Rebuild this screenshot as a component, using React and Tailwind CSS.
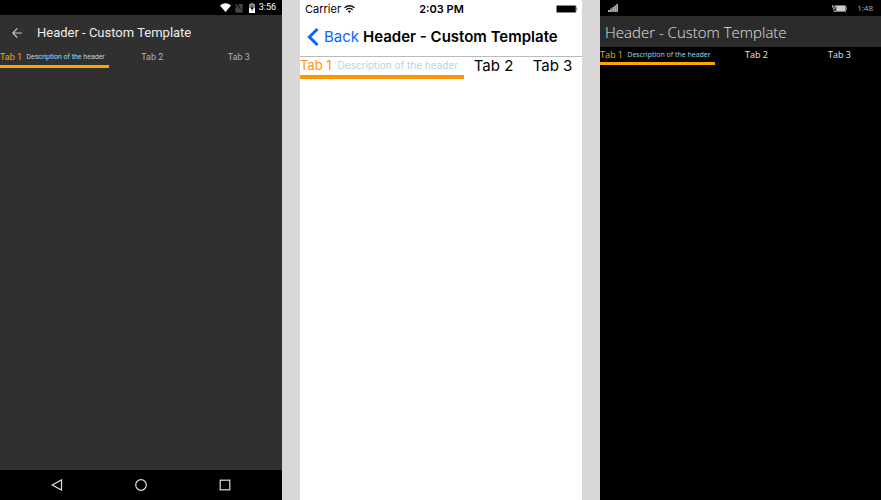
import React from "react";

function Tabs({ className, tabClass, activeClass, titleClass, descriptionClass }) {
  return (
    <div role="tablist" className={`flex items-start whitespace-nowrap ${className}`}>
      <button role="tab" aria-selected="true" className={`flex shrink-0 items-center ${activeClass}`}>
        <span className={titleClass}>Tab 1</span>
        <span className={`flex-1 text-center ${descriptionClass}`}>Description of the header</span>
      </button>
      <button role="tab" aria-selected="false" className={`flex-1 text-center ${tabClass}`}>Tab 2</button>
      <button role="tab" aria-selected="false" className={`flex-1 text-center ${tabClass}`}>Tab 3</button>
    </div>
  );
}

function AndroidScreen() {
  return (
    <section className="flex flex-col bg-[#303030] font-['Roboto',sans-serif]">
      <div className="flex h-[15px] items-center justify-end bg-black pr-[6px] text-white">
        <svg className="mr-[4px] h-[9px] w-[11px]" viewBox="0 0 11 9" fill="currentColor">
          <path d="M0 2.4Q5.5-1.8 11 2.4L5.5 9Z" />
        </svg>
        <svg className="mr-[6px] h-[10px] w-[8px]" viewBox="0 0 8 10">
          <path d="M3 1H7.5V9ZM0.5 3V9.5H7Z" fill="#4a4a4a" />
          <path d="M0.5 1L7.5 9.5" stroke="#888" strokeWidth="0.8" />
        </svg>
        <svg className="mr-[4px] h-[10px] w-[6px]" viewBox="0 0 6 10">
          <path d="M0 1H1.5V0H4.5V1H6V5H0Z" fill="#888" />
          <path d="M0 5H6V10H0Z" fill="#fff" />
          <path d="M3.5 2L1.5 6H2.8V8.5L4.8 4.8H3.5Z" fill="#111" />
        </svg>
        <span className="text-[9px] leading-[15px]">3:56</span>
      </div>
      <header className="flex h-[36px] items-center pl-[12px] text-[#eeeeee]">
        <button aria-label="Back" className="mr-[15px]">
          <svg className="h-[10px] w-[10px]" viewBox="0 0 10 10" fill="none" stroke="#c8c8c8" strokeWidth="1.1">
            <path d="M10 5H0.8M5.2 0.5L0.7 5L5.2 9.5" />
          </svg>
        </button>
        <h1 className="text-[13px] leading-[20px]">Header - Custom Template</h1>
      </header>
      <Tabs
        className="flex-1"
        activeClass="h-[17px] w-[109px] border-b-3 border-[#ffa500] pb-[2px]"
        titleClass="text-[9px] leading-[12px] text-[#ffa500]"
        descriptionClass="text-[7px] leading-[12px] text-[#add8e6]"
        tabClass="text-[9px] leading-[12px] text-[#b0b0b0]"
      />
      <nav className="flex h-[30px] items-center justify-center gap-[72px] bg-black">
        <button aria-label="Back">
          <svg className="h-[12px] w-[12px]" viewBox="0 0 12 12" fill="none" stroke="#ddd" strokeWidth="1.2">
            <path d="M10.5 0.9V11.1L1.2 6Z" />
          </svg>
        </button>
        <button aria-label="Home">
          <svg className="h-[12px] w-[12px]" viewBox="0 0 12 12" fill="none" stroke="#ddd" strokeWidth="1.2">
            <circle cx="6" cy="6" r="5.3" />
          </svg>
        </button>
        <button aria-label="Recent apps">
          <svg className="h-[12px] w-[12px]" viewBox="0 0 12 12" fill="none" stroke="#ddd" strokeWidth="1.2">
            <rect x="1.2" y="1.2" width="9.6" height="9.6" />
          </svg>
        </button>
      </nav>
    </section>
  );
}

function AppleScreen() {
  return (
    <section className="flex flex-col bg-white font-['Inter',sans-serif] text-black">
      <div className="grid h-[18px] grid-cols-3 items-center pl-[5px] pr-[4px] text-[11px] leading-[18px]">
        <span className="flex items-center gap-[3px]">
          Carrier
          <svg className="h-[8px] w-[11px]" viewBox="0 0 11 8" fill="none" stroke="#111" strokeWidth="1.4">
            <path d="M0.5 2.8Q5.5-1.3 10.5 2.8M2.3 4.7Q5.5 2.1 8.7 4.7" />
            <path d="M3.8 6.1Q5.5 4.8 7.2 6.1L5.5 8Z" fill="#111" stroke="none" />
          </svg>
        </span>
        <span className="text-center font-semibold">2:03 PM</span>
        <svg className="h-[8px] w-[22px] justify-self-end" viewBox="0 0 22 8">
          <rect x="0.5" y="0.5" width="19.5" height="7" rx="1" fill="#000" stroke="#888" />
          <path d="M20.7 2.5Q22 4 20.7 5.5Z" fill="#222" />
        </svg>
      </div>
      <header className="flex h-[39px] items-center whitespace-nowrap border-b border-[#bababa] pl-[7px]">
        <button className="flex items-center gap-[5px] text-[15px] leading-[20px] text-[#0a66ff]">
          <svg className="h-[18px] w-[12px]" viewBox="0 0 12 18" fill="none" stroke="currentColor" strokeWidth="3">
            <path d="M10.5 1L2.4 9L10.5 17" />
          </svg>
          Back
        </button>
        <h1 className="ml-[4px] text-[15px] font-semibold leading-[20px]">Header - Custom Template</h1>
      </header>
      <Tabs
        className="flex-1"
        activeClass="h-[22px] w-[164px] border-b-4 border-[#ff9500] pb-[2px]"
        titleClass="text-[13px] leading-[16px] text-[#ff9500]"
        descriptionClass="text-[10px] leading-[16px] text-[#add8e6]"
        tabClass="text-[15px] leading-[18px]"
      />
    </section>
  );
}

function WindowsScreen() {
  return (
    <section className="flex flex-col bg-black font-['Open_Sans','Noto_Sans',sans-serif]">
      <div className="flex h-[16px] items-center pl-[8px] pr-[8px] text-[#b0b0b0]">
        <svg className="h-[8px] w-[10px]" viewBox="0 0 10 8" fill="#aaa">
          <path d="M0 6H2V8H0ZM2.2 4.5H4V8H2.2ZM4.2 3H6V8H4.2ZM6.2 1.5H8V8H6.2ZM8.2 0H10V8H8.2Z" />
        </svg>
        <svg className="ml-auto mr-[10px] h-[7px] w-[15px]" viewBox="0 0 15 7">
          <path d="M0.5 0V2Q0.5 3.2 2 3.2Q3.5 3.2 3.5 2V0M0.5 1.5H3.5M2 3V6.5H4" fill="none" stroke="#aaa" strokeWidth="0.9" />
          <rect x="4" y="0.5" width="9.5" height="6" fill="#ccc" stroke="#777" strokeWidth="1" />
          <path d="M14 2H15V5H14Z" fill="#888" />
        </svg>
        <span className="text-[8px] leading-[16px]">1:48</span>
      </div>
      <header className="flex h-[31px] items-center bg-[#2b2b2b] pl-[5px]">
        <h1 className="whitespace-nowrap text-[15px] font-light leading-[24px] text-[#e0e0e0]">Header - Custom Template</h1>
      </header>
      <Tabs
        className="flex-1"
        activeClass="h-[18px] w-[115px] border-b-3 border-[#ffa500]"
        titleClass="text-[9px] leading-[15px] text-[#ffa500]"
        descriptionClass="text-[7px] leading-[15px] text-[#add8e6]"
        tabClass="text-[9px] leading-[15px] text-[#e6e6e6]"
      />
    </section>
  );
}

export default function App() {
  return (
    <main className="grid min-h-screen grid-cols-[282fr_282fr_281fr] gap-[18px] bg-[#d8d8d8]">
      <AndroidScreen />
      <AppleScreen />
      <WindowsScreen />
    </main>
  );
}
